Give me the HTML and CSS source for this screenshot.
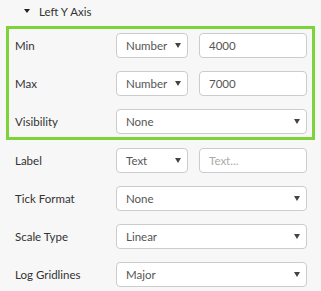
FILE: index.html
```html
<!DOCTYPE html>
<html lang="en">
<head>
    <meta charset="UTF-8">
    <title>Left Y Axis</title>
    <link rel="stylesheet" href="styles.css">
</head>
<body>
    <div class="panel">
        <div class="section-head">
            <span class="caret"></span>
            <span class="section-title">Left Y Axis</span>
        </div>

        <div class="highlight">
            <div class="row">
                <label class="row-label">Min</label>
                <div class="select small"><span>Number</span><i class="arrow"></i></div>
                <div class="input"><span>4000</span></div>
            </div>
            <div class="row">
                <label class="row-label">Max</label>
                <div class="select small"><span>Number</span><i class="arrow"></i></div>
                <div class="input"><span>7000</span></div>
            </div>
            <div class="row">
                <label class="row-label">Visibility</label>
                <div class="select wide"><span>None</span><i class="arrow"></i></div>
            </div>
        </div>

        <div class="rows">
            <div class="row">
                <label class="row-label">Label</label>
                <div class="select small"><span>Text</span><i class="arrow"></i></div>
                <div class="input"><span class="placeholder">Text...</span></div>
            </div>
            <div class="row">
                <label class="row-label">Tick Format</label>
                <div class="select wide"><span>None</span><i class="arrow"></i></div>
            </div>
            <div class="row">
                <label class="row-label">Scale Type</label>
                <div class="select wide"><span>Linear</span><i class="arrow"></i></div>
            </div>
            <div class="row">
                <label class="row-label">Log Gridlines</label>
                <div class="select wide"><span>Major</span><i class="arrow"></i></div>
            </div>
        </div>
    </div>
</body>
</html>
```

FILE: styles.css
```css
body {
    margin: 0;
    background: #f7f7f7;
    font-family: 'Lato', sans-serif;
    font-size: 11.5px;
    color: #333;
}
.panel {
    width: 321px;
    height: 291px;
    overflow: hidden;
}
.section-head {
    height: 26px;
    display: flex;
    align-items: center;
    padding-left: 24px;
    box-sizing: border-box;
    padding-bottom: 4px;
}
.caret {
    width: 0;
    height: 0;
    border-left: 3px solid transparent;
    border-right: 3px solid transparent;
    border-top: 4px solid #222;
    margin-right: 9px;
}
.section-title {
    color: #333;
}
.highlight {
    margin: 0 6px;
    border: 3px solid #7ed33a;
    padding: 4px 5px 3px 6px;
    display: flex;
    flex-direction: column;
    gap: 13px;
}
.rows {
    padding: 8px 14px 0 15px;
    display: flex;
    flex-direction: column;
    gap: 13px;
}
.row {
    display: flex;
    align-items: center;
    height: 25px;
}
.row-label {
    width: 101px;
    flex: none;
}
.select,
.input {
    height: 25px;
    box-sizing: border-box;
    border: 1px solid #ccc;
    border-radius: 4px;
    background: #fff;
    display: flex;
    align-items: center;
    padding-left: 9px;
    color: #555;
}
.select {
    position: relative;
}
.select.small {
    width: 72px;
    margin-right: 11px;
}
.select.wide {
    width: 191px;
}
.input {
    width: 108px;
}
.placeholder {
    color: #aaa;
}
.arrow {
    position: absolute;
    right: 6px;
    top: 9px;
    width: 0;
    height: 0;
    border-left: 3px solid transparent;
    border-right: 3px solid transparent;
    border-top: 5px solid #444;
}
```
